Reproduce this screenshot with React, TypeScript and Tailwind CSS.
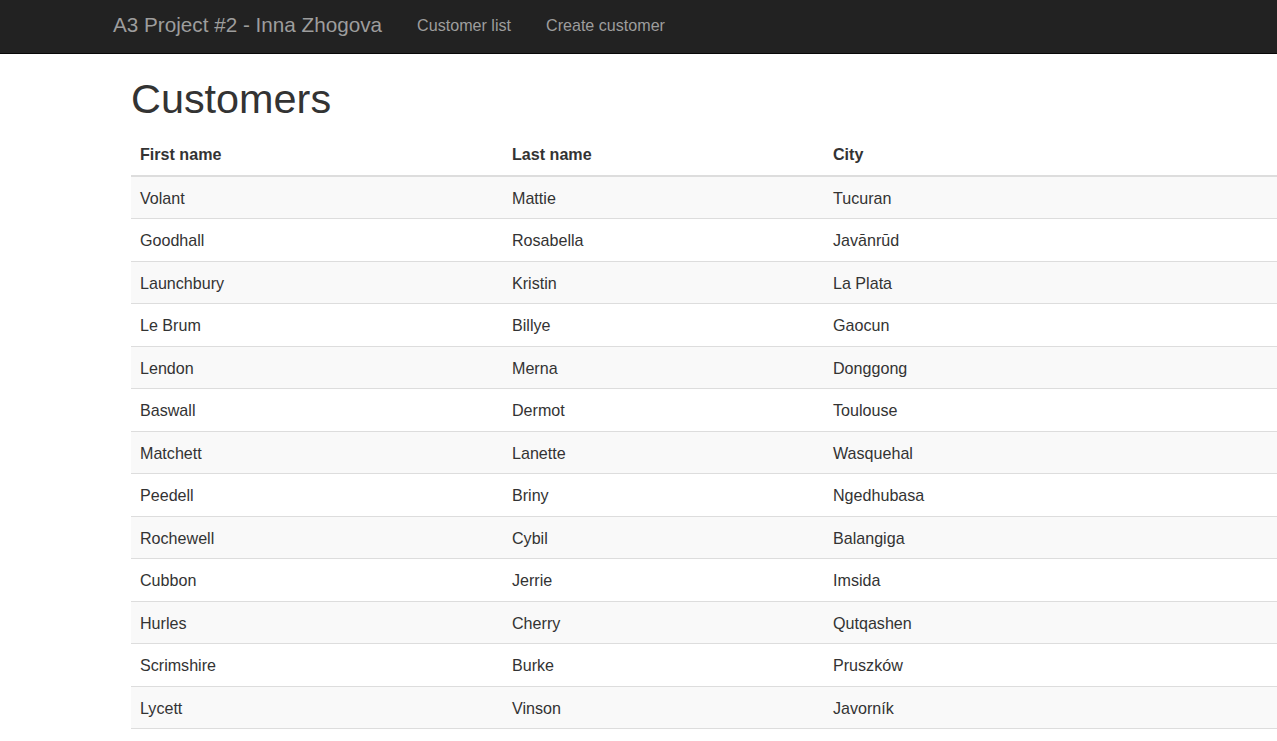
const customers = [
  ['Volant', 'Mattie', 'Tucuran'],
  ['Goodhall', 'Rosabella', 'Javānrūd'],
  ['Launchbury', 'Kristin', 'La Plata'],
  ['Le Brum', 'Billye', 'Gaocun'],
  ['Lendon', 'Merna', 'Donggong'],
  ['Baswall', 'Dermot', 'Toulouse'],
  ['Matchett', 'Lanette', 'Wasquehal'],
  ['Peedell', 'Briny', 'Ngedhubasa'],
  ['Rochewell', 'Cybil', 'Balangiga'],
  ['Cubbon', 'Jerrie', 'Imsida'],
  ['Hurles', 'Cherry', 'Qutqashen'],
  ['Scrimshire', 'Burke', 'Pruszków'],
  ['Lycett', 'Vinson', 'Javorník'],
];

export default function App() {
  return (
    <div className="min-h-screen bg-white text-[#333] font-['Liberation_Sans',Arial,sans-serif] text-[16.1px] overflow-hidden">
      {/* Navbar */}
      <nav className="h-[54px] bg-[#222] border-b border-[#080808]">
        <div className="flex items-center h-[50px] pl-[113px]">
          <a href="#" className="text-[20.7px] text-[#9d9d9d] leading-none">
            A3 Project #2 - Inna Zhogova
          </a>
          <ul className="flex ml-[35px]">
            <li>
              <a href="#" className="block text-[#9d9d9d] leading-none">Customer list</a>
            </li>
            <li>
              <a href="#" className="block text-[#9d9d9d] leading-none ml-[35px]">Create customer</a>
            </li>
          </ul>
        </div>
      </nav>

      {/* Content */}
      <main className="pl-[131px]">
        <h1 className="mt-[23px] mb-[11px] text-[41.4px] leading-[1.1] font-normal">Customers</h1>

        <div className="w-full">
          <div className="flex h-[43px] items-center border-b-2 border-[#ddd] font-bold">
            <div className="w-[372px] pl-[9px]">First name</div>
            <div className="w-[321px] pl-[9px]">Last name</div>
            <div className="flex-1 pl-[9px]">City</div>
          </div>
          {customers.map(([first, last, city], i) => (
            <div
              key={first}
              className={`flex h-[42.5px] items-center pt-[1px] border-b border-[#ddd] ${
                i % 2 === 0 ? 'bg-[#f9f9f9]' : 'bg-white'
              }`}
            >
              <div className="w-[372px] pl-[9px]">{first}</div>
              <div className="w-[321px] pl-[9px]">{last}</div>
              <div className="flex-1 pl-[9px]">{city}</div>
            </div>
          ))}
        </div>
      </main>
    </div>
  );
}
